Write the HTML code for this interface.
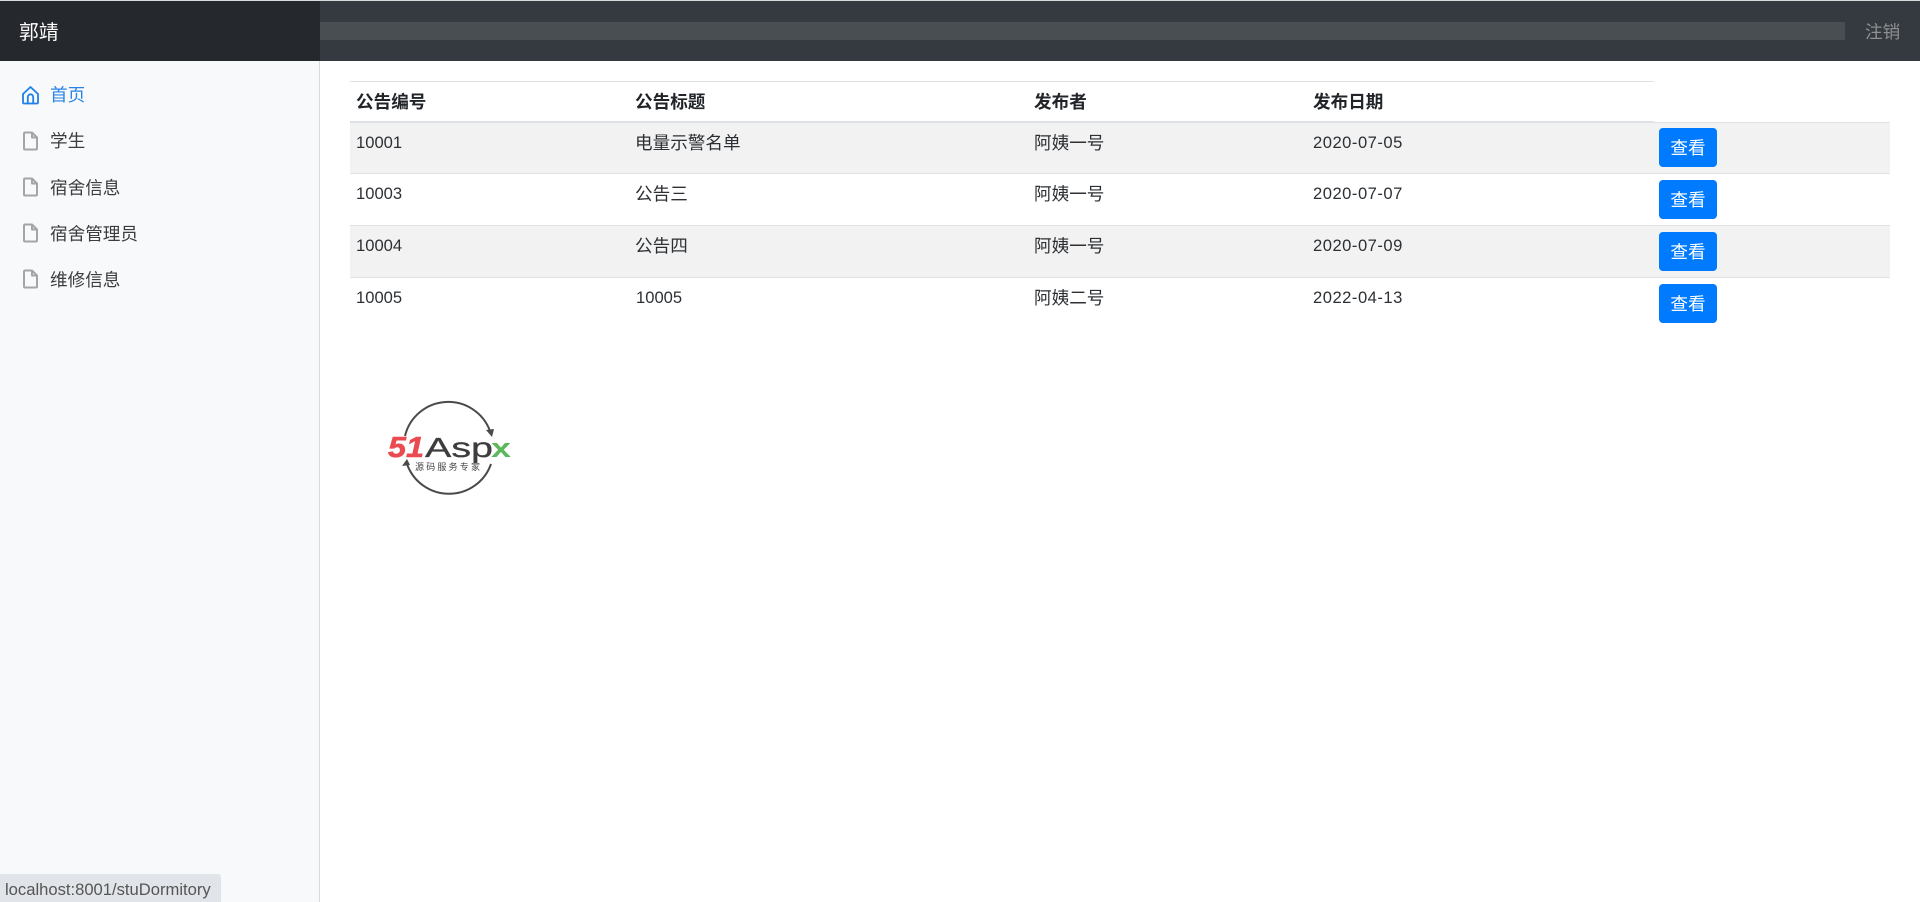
<!DOCTYPE html>
<html lang="zh">
<head>
<meta charset="utf-8">
<title>公告</title>
<style>
html,body{margin:0;padding:0;width:1920px;height:902px;overflow:hidden;background:#fff;font-family:"Liberation Sans","Noto Sans CJK SC",sans-serif;color:#2c3034;font-size:17.6px}
div,span,svg{position:absolute}
.t{white-space:nowrap;line-height:24px}
.l{font-size:16.6px}
.d{font-size:16.6px;letter-spacing:.5px}
.b{font-weight:700;color:#212529}
.btn{left:1659px;width:58px;height:39px;background:#007bff;border-radius:4px;color:#fff;text-align:center;line-height:40px;font-size:17.6px}
.nav{left:50px;white-space:nowrap;line-height:24px;color:#3a3d40}
.ic{left:22px;width:18px;height:20px}
.row{left:350px;width:1540px}
</style>
</head>
<body>
<div style="left:0;top:0;width:1920px;height:1px;background:#d8d9da"></div>
<div style="left:0;top:1px;width:1920px;height:60px;background:#343a40"></div>
<div style="left:0;top:1px;width:320px;height:60px;background:#25282d"></div>
<div style="left:320px;top:22px;width:1525px;height:18px;background:#494e53"></div>
<div class="t" style="left:19px;top:21px;color:#fff;font-size:19.8px">郭靖</div>
<div class="t" style="left:1865px;top:20px;color:#8f9193;font-size:17.6px">注销</div>

<div style="left:0;top:61px;width:319px;height:841px;background:#f8f9fa"></div>
<div style="left:319px;top:61px;width:1px;height:841px;background:#d9dadb"></div>

<svg class="ic" style="top:85px" viewBox="0 0 18 20" fill="none" stroke="#1f80e8" stroke-width="1.8" stroke-linejoin="round" stroke-linecap="round"><path d="M1 9L8.500 2L16 9V17.500a1 1 0 0 1-1 1H2a1 1 0 0 1-1-1z"/><path d="M5.800 18.500V12a2.700 2.700 0 0 1 5.400 0V18.500"/></svg>
<div class="nav" style="top:83px;color:#2a83e6">首页</div>

<svg class="ic" style="top:131px" viewBox="0 0 18 20" fill="none" stroke="#a4a5a6" stroke-width="2" stroke-linejoin="round"><path d="M2 2.500a1 1 0 0 1 1-1H10L15 6.500V17.500a1 1 0 0 1-1 1H3a1 1 0 0 1-1-1z"/><path d="M10 1.500V6.500h5"/></svg>
<div class="nav" style="top:129px">学生</div>
<svg class="ic" style="top:177px" viewBox="0 0 18 20" fill="none" stroke="#a4a5a6" stroke-width="2" stroke-linejoin="round"><path d="M2 2.500a1 1 0 0 1 1-1H10L15 6.500V17.500a1 1 0 0 1-1 1H3a1 1 0 0 1-1-1z"/><path d="M10 1.500V6.500h5"/></svg>
<div class="nav" style="top:176px">宿舍信息</div>
<svg class="ic" style="top:223px" viewBox="0 0 18 20" fill="none" stroke="#a4a5a6" stroke-width="2" stroke-linejoin="round"><path d="M2 2.500a1 1 0 0 1 1-1H10L15 6.500V17.500a1 1 0 0 1-1 1H3a1 1 0 0 1-1-1z"/><path d="M10 1.500V6.500h5"/></svg>
<div class="nav" style="top:222px">宿舍管理员</div>
<svg class="ic" style="top:269px" viewBox="0 0 18 20" fill="none" stroke="#a4a5a6" stroke-width="2" stroke-linejoin="round"><path d="M2 2.500a1 1 0 0 1 1-1H10L15 6.500V17.500a1 1 0 0 1-1 1H3a1 1 0 0 1-1-1z"/><path d="M10 1.500V6.500h5"/></svg>
<div class="nav" style="top:268px">维修信息</div>

<!-- table -->
<div style="left:350px;top:81px;width:1304px;height:1px;background:#dee2e6"></div>
<div style="left:350px;top:121px;width:1304px;height:2px;background:#dee2e6"></div>
<div class="row" style="top:122px;height:51px;background:#f2f2f2;border-top:1px solid #dee2e6;box-sizing:border-box"></div>
<div class="row" style="top:173px;height:1px;background:#dee2e6"></div>
<div class="row" style="top:225px;height:1px;background:#dee2e6"></div>
<div class="row" style="top:226px;height:51px;background:#f2f2f2"></div>
<div class="row" style="top:277px;height:1px;background:#dee2e6"></div>

<div class="t b" style="left:356px;top:90px">公告编号</div>
<div class="t b" style="left:635px;top:90px">公告标题</div>
<div class="t b" style="left:1034px;top:90px">发布者</div>
<div class="t b" style="left:1313px;top:90px">发布日期</div>

<div class="t l" style="left:356px;top:131px">10001</div>
<div class="t" style="left:635px;top:131px">电量示警名单</div>
<div class="t" style="left:1034px;top:131px">阿姨一号</div>
<div class="t d" style="left:1313px;top:131px">2020-07-05</div>
<div class="btn" style="top:128px">查看</div>

<div class="t l" style="left:356px;top:182px">10003</div>
<div class="t" style="left:635px;top:182px">公告三</div>
<div class="t" style="left:1034px;top:182px">阿姨一号</div>
<div class="t d" style="left:1313px;top:182px">2020-07-07</div>
<div class="btn" style="top:180px">查看</div>

<div class="t l" style="left:356px;top:234px">10004</div>
<div class="t" style="left:635px;top:234px">公告四</div>
<div class="t" style="left:1034px;top:234px">阿姨一号</div>
<div class="t d" style="left:1313px;top:234px">2020-07-09</div>
<div class="btn" style="top:232px">查看</div>

<div class="t l" style="left:356px;top:286px">10005</div>
<div class="t l" style="left:636px;top:286px">10005</div>
<div class="t" style="left:1034px;top:286px">阿姨二号</div>
<div class="t d" style="left:1313px;top:286px">2022-04-13</div>
<div class="btn" style="top:284px">查看</div>

<!-- logo -->
<svg style="left:380px;top:395px" width="140" height="110" viewBox="380 395 140 110">
<g fill="none" stroke="#4a4a4a" stroke-width="2">
<path d="M405 436A44.500 44.500 0 0 1 490 431"/>
<path d="M407 464A44.500 44.500 0 0 0 491 464"/>
</g>
<path d="M486 430l8 -1l-2 8z" fill="#4a4a4a"/>
<path d="M402 466l8 -1l-3 -6z" fill="#4a4a4a"/>
<text x="388" y="457" font-family="Liberation Sans" font-weight="700" font-style="italic" font-size="29" fill="#ea4b50" textLength="36" lengthAdjust="spacingAndGlyphs" stroke="#ea4b50" stroke-width=".6">51</text>
<text x="425" y="457" font-family="Liberation Sans" font-size="28" fill="#3d3d3d" stroke="#3d3d3d" stroke-width=".3" textLength="68" lengthAdjust="spacingAndGlyphs">Asp</text>
<text x="491" y="457" font-family="Liberation Sans" font-weight="700" font-size="27" fill="#5cb85c" textLength="20" lengthAdjust="spacingAndGlyphs">x</text>
<text x="415" y="470" font-family="Liberation Sans,Noto Sans CJK SC,sans-serif" font-size="9" fill="#444" textLength="65">源码服务专家</text>
</svg>

<!-- status bubble -->
<div style="left:0;top:874px;width:221px;height:28px;background:#e1e4e8;border-top-right-radius:3px"></div>
<div class="t" style="left:5px;top:878px;font-size:16.6px;color:#555">localhost:8001/stuDormitory</div>
</body>
</html>
